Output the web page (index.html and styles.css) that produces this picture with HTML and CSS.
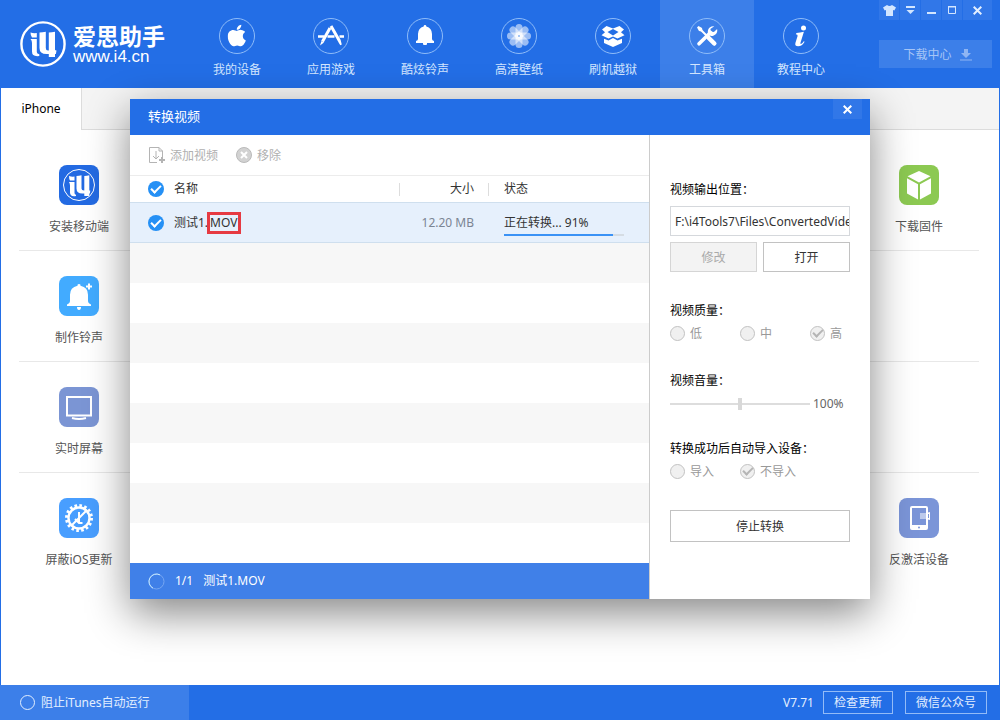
FILE: index.html
```html
<!DOCTYPE html>
<html lang="zh-CN">
<head>
<meta charset="utf-8">
<meta name="viewport" content="width=device-width, initial-scale=1">
<title>爱思助手</title>
<link rel="stylesheet" href="styles.css">
</head>
<body>
<svg class="defs" width="0" height="0" aria-hidden="true">
  <symbol id="brand" viewBox="0 0 46 46">
    <circle cx="23" cy="23" r="21.6" fill="none" stroke="#fff" stroke-width="2.4"/>
    <g fill="#fff">
      <path d="M10.500 11.500q3 1 6.300.5v4.500h-4.800q-1.500-2-1.500-5z"/>
      <path d="M10.500 18h6.300v13q0 2 2.500 2.200v1.800q-7.300 1-7.300-4.500v-8.500q0-2.500-1.500-4z"/>
      <path d="M19.500 11.500q3 0 6.300-.7v16.200q0 2.500 2.200 2.500h.8V11.500q3 0 6.200-.7v18q0 .7 1.500.7l-.6 3.500h-.9v3h-6.200v-3h-2.300q-7 0-7-6z"/>
    </g>
  </symbol>
  <symbol id="bell" viewBox="0 0 18 20">
    <path fill="#fff" d="M9 0a1.300 1.300 0 0 1 1.300 1.400Q16 3 16 9v5q0 1.500 2 2v2H0v-2q2-.5 2-2V9Q2 3 7.700 1.400A1.300 1.300 0 0 1 9 0zM7 18h4v1a1 1 0 0 1-1 1H8a1 1 0 0 1-1-1z"/>
  </symbol>
</svg>

<div class="app">
  <header class="header">
    <a class="logo" href="#">
      <svg class="logo-mark"><use href="#brand"/></svg>
      <span class="logo-text"><strong>爱思助手</strong><span>www.i4.cn</span></span>
    </a>
    <nav class="nav">
      <a class="nav-item" href="#">
        <svg class="nav-icon" viewBox="0 0 36 36"><circle class="ring" cx="18" cy="18" r="17.500"/><svg x="8.500" y="5" width="18.500" height="25" viewBox="0 0 384 512"><path fill="#fff" d="M318.700 268.700c-.2-36.700 16.400-64.400 50-84.800-18.800-26.900-47.200-41.700-84.700-44.600-35.500-2.800-74.300 20.700-88.500 20.700-15 0-49.400-19.700-76.400-19.700C63.300 141.200 4 184.800 4 273.500q0 39.300 14.400 81.200c12.800 36.700 59 126.700 107.200 125.200 25.200-.6 43-17.900 75.800-17.900 31.800 0 48.300 17.900 76.400 17.900 48.600-.7 90.400-82.500 102.600-119.300-65.200-30.700-61.700-90-61.700-91.900zm-56.600-164.200c27.300-32.400 24.800-61.900 24-72.500-24.100 1.400-52 16.400-67.900 34.900-17.500 19.800-27.800 44.300-25.600 71.900 26.100 2 49.900-11.400 69.500-34.300z"/></svg></svg>
        <span>我的设备</span>
      </a>
      <a class="nav-item" href="#">
        <svg class="nav-icon" viewBox="0 0 36 36"><circle class="ring" cx="18" cy="18" r="17.500"/><g stroke="#fff" stroke-width="3" fill="none"><path d="M17 10 9.500 23.500M18 8l8.500 15"/><path d="M5 18.500h6M14.500 18.500h7M26.500 18.500H31" stroke-width="2.600"/></g><path fill="#fff" d="m8.500 23 2.500 1.400-4 3.100zM25 23.500l2.600-1.500 1.200 4.500-1.500.8z"/></svg>
        <span>应用游戏</span>
      </a>
      <a class="nav-item" href="#">
        <svg class="nav-icon" viewBox="0 0 36 36"><circle class="ring" cx="18" cy="18" r="17.500"/><svg x="9" y="7" width="18" height="20"><use href="#bell"/></svg></svg>
        <span>酷炫铃声</span>
      </a>
      <a class="nav-item" href="#">
        <svg class="nav-icon" viewBox="0 0 36 36"><circle class="ring" cx="18" cy="18" r="17.500"/><g fill="#fff" fill-opacity=".55"><rect x="14.500" y="6" width="7" height="12" rx="3.500"/><rect x="14.500" y="6" width="7" height="12" rx="3.500" transform="rotate(45 18 18)"/><rect x="14.500" y="6" width="7" height="12" rx="3.500" transform="rotate(90 18 18)"/><rect x="14.500" y="6" width="7" height="12" rx="3.500" transform="rotate(135 18 18)"/><rect x="14.500" y="6" width="7" height="12" rx="3.500" transform="rotate(180 18 18)"/><rect x="14.500" y="6" width="7" height="12" rx="3.500" transform="rotate(225 18 18)"/><rect x="14.500" y="6" width="7" height="12" rx="3.500" transform="rotate(270 18 18)"/><rect x="14.500" y="6" width="7" height="12" rx="3.500" transform="rotate(315 18 18)"/></g><circle cx="18" cy="18" r="4" fill="#fff" fill-opacity=".6"/><circle cx="18" cy="18" r="1" fill="#8db6f2"/></svg>
        <span>高清壁纸</span>
      </a>
      <a class="nav-item" href="#">
        <svg class="nav-icon" viewBox="0 0 36 36"><circle class="ring" cx="18" cy="18" r="17.500"/><path fill="#fff" d="m11.500 8 6.500 2.500L24.500 8l4.500 3.500-3 2.800 3.500 2.900-7 3.300-4.500-2-4.500 2-7-3.300 3.500-2.900-3-2.800z"/><path fill="#236ee6" d="m18 11 5.500 3-5.500 3.500-5.500-3.500z"/><path fill="#fff" d="m9 20.700 4.500 1.800 4.500-2.500 4.500 2.500 4.500-1.800V25l-9 4-9-4z"/></svg>
        <span>刷机越狱</span>
      </a>
      <a class="nav-item active" href="#" aria-current="page">
        <svg class="nav-icon" viewBox="0 0 36 36"><circle class="ring" cx="18" cy="18" r="17.500"/><g fill="none" stroke="#fff" stroke-linecap="round"><path d="m10 25.800 11.500-11.300" stroke-width="3.600"/><path d="m10.500 10.500 9 9" stroke-width="2"/><path d="m19.800 20 5.500 5.500" stroke-width="4.500"/></g><path fill="#fff" d="m8 9.500 1.500-1.500 3.500 2 .5 2.500-1 1-2.500-.5z"/><path fill="#fff" d="M25.300 8.300a5.500 5.500 0 0 0-6.200 7.200l2.400 2.200a5.400 5.400 0 0 0 6.600-6.600l-3.200 3-3-.5-.5-2.700z"/></svg>
        <span>工具箱</span>
      </a>
      <a class="nav-item" href="#">
        <svg class="nav-icon" viewBox="0 0 36 36"><circle class="ring" cx="18" cy="18" r="17.500"/><circle cx="20.500" cy="10" r="2.500" fill="#fff"/><path fill="#fff" d="M13.500 15q3.500-.2 7.400-1.200l-3.400 11q-.3 1.200.4 1.200 1.200-.2 2.900-2.800l.8.500q-2.600 4.600-6.500 4.600-3.500 0-2.700-3.200l2.200-7.200q.4-1.500-1.800-1.700z"/></svg>
        <span>教程中心</span>
      </a>
    </nav>
    <div class="header-side">
      <div class="window-buttons">
        <button type="button" aria-label="皮肤"><svg width="13" height="11" viewBox="0 0 13 11"><path fill="#d3e6ff" d="M4 0q2.500 2 5 0l4 2.500-1.700 3L10 5v6H3V5l-1.300.5L0 2.500z"/></svg></button>
        <button type="button" aria-label="菜单"><svg width="9" height="8" viewBox="0 0 9 8"><path fill="#d3e6ff" d="M0 0h9v2H0zM.5 4h8l-4 4z"/></svg></button>
        <button type="button" aria-label="最小化"><svg width="9" height="8" viewBox="0 0 9 8"><path fill="#d3e6ff" d="M0 6h9v2H0z"/></svg></button>
        <button type="button" aria-label="最大化"><svg width="8" height="8" viewBox="0 0 8 8"><path fill="none" stroke="#d3e6ff" d="M.5 1h7v6.500h-7zM0 .5h8"/></svg></button>
        <button type="button" class="wide" aria-label="关闭"><svg width="9" height="9" viewBox="0 0 9 9"><path stroke="#e3efff" stroke-width="2" d="m.7.7 7.600 7.600m0-7.600L.7 8.300"/></svg></button>
      </div>
      <button type="button" class="download-center">下载中心
        <svg width="12" height="12" viewBox="0 0 12 12"><path fill="#8fb5f3" d="M4 0h4v4h3L6 9 1 4h3zM0 10.500h12v1H0z"/></svg>
      </button>
    </div>
  </header>

  <div class="tabs"><button type="button" class="tab">iPhone</button></div>

  <main class="tools">
    <div class="tool-row">
      <button type="button" class="tool"><svg viewBox="0 0 40 40"><rect width="40" height="40" rx="8" fill="#236ae2"/><circle cx="20" cy="20" r="15.500" fill="none" stroke="#fff"/><svg x="0" y="0" width="40" height="40" viewBox="3 3 40 40"><g fill="#fff"><path d="M13 14q3 1 5.500.5v4H14q-1-1.500-1-4.500zM13 20h5.500v11q0 1.500 1.500 1.700V34q-6 1-6-3.500v-7q0-2-1-3.500zM20.500 14q2.500 0 5-.7v13.200q0 2 2.500 2h.3V14q2.700 0 5-.7v15.200h1l-.4 3h-.6V34h-5v-2.500h-2q-5.800 0-5.800-5z"/></g></svg></svg><span>安装移动端</span></button>
      <button type="button" class="tool"><svg viewBox="0 0 40 40"><rect width="40" height="40" rx="8" fill="#8cc952"/><path fill="#fff" d="m20 6 11.500 5.300L20 17.500 8.500 11.300zM8 13.300l11 6v15.200l-11-6zM32 13.300l-11 6v15.200l11-6z"/></svg><span>下载固件</span></button>
    </div>
    <div class="tool-row">
      <button type="button" class="tool"><svg viewBox="0 0 40 40"><rect width="40" height="40" rx="8" fill="#42abff"/><path fill="#fff" d="M20 8a1.500 1.500 0 0 1 1.500 1.800q7.500 1.500 7.500 9v6q0 2.700 3 3.700V30H8v-1.500q3-1 3-3.700v-6q0-7.500 7.500-9A1.500 1.500 0 0 1 20 8zM18 31h4q0 3-2 3t-2-3zM29 7.500h2v2h2v2h-2v2h-2v-2h-2v-2h2z"/></svg><span>制作铃声</span></button>
    </div>
    <div class="tool-row">
      <button type="button" class="tool"><svg viewBox="0 0 40 40"><rect width="40" height="40" rx="8" fill="#7b95d4"/><path fill="none" stroke="#fff" stroke-width="2" d="M8 10h24v18.500H8zM13 31q7 1.800 14 0"/></svg><span>实时屏幕</span></button>
    </div>
    <div class="tool-row">
      <button type="button" class="tool"><svg viewBox="0 0 40 40"><rect width="40" height="40" rx="8" fill="#489eff"/><circle cx="20" cy="20" r="12.500" fill="none" stroke="#fff" stroke-width="3" stroke-dasharray="2.600 2.309"/><circle cx="20" cy="20" r="10.500" fill="none" stroke="#fff" stroke-width="2.400"/><path fill="none" stroke="#fff" stroke-width="2" d="m12 28 16-16M20 14v10m-4-3 4 4h3.500"/></svg><span>屏蔽iOS更新</span></button>
      <button type="button" class="tool"><svg viewBox="0 0 40 40"><rect width="40" height="40" rx="8" fill="#7b95d8"/><path fill="#fff" fill-rule="evenodd" d="M13 8h14a2 2 0 0 1 2 2v20a2 2 0 0 1-2 2H13a2 2 0 0 1-2-2V10a2 2 0 0 1 2-2zM13 10v17h14V10z"/><path fill="#bccaec" d="M21 15h6v6h-6z"/><path fill="#fff" d="m27 15 4-1v8l-4-1z"/><path fill="#7b95d8" d="M29 16h1v4h-1z"/><circle cx="20" cy="29.500" r="1" fill="#7b95d8"/></svg><span>反激活设备</span></button>
    </div>
  </main>

  <footer class="footer">
    <label class="block-itunes"><input type="checkbox">阻止iTunes自动运行</label>
    <div class="footer-side">
      <span>V7.71</span>
      <button type="button">检查更新</button>
      <button type="button">微信公众号</button>
    </div>
  </footer>

  <div class="overlay">
    <section class="dialog" role="dialog" aria-labelledby="dialog-title">
      <div class="dialog-head">
        <h1 id="dialog-title">转换视频</h1>
        <button type="button" class="dialog-close" aria-label="关闭"><svg width="9" height="9" viewBox="0 0 9 9"><path stroke="#fff" stroke-width="2" d="m.7.7 7.600 7.600m0-7.600L.7 8.300"/></svg></button>
      </div>
      <div class="dialog-body">
        <div class="queue">
          <div class="toolbar">
            <button type="button" disabled><svg width="17" height="18" viewBox="0 0 17 18"><g fill="none" stroke="#b4b4b4"><path d="M9 16.500H1.500v-15H11L14.500 5v6M11 1.500V5h3.500M8 5v8M5 10l3 3 3-3"/><path stroke-width="2" d="M14 11v6M11 14h6"/></g></svg><span>添加视频</span></button>
            <button type="button" disabled><svg width="16" height="16" viewBox="0 0 16 16"><circle cx="8" cy="8" r="7.500" fill="#d2d2d2" stroke="#bababa"/><path stroke="#fff" stroke-width="2" d="m5 5 6 6m0-6-6 6"/></svg><span>移除</span></button>
          </div>
          <table class="files">
            <thead>
              <tr>
                <th class="name"><div><input class="check" type="checkbox" checked aria-label="全选">名称</div></th>
                <th class="size">大小</th>
                <th class="state">状态</th>
              </tr>
            </thead>
            <tbody>
              <tr>
                <td class="name"><div><input class="check" type="checkbox" checked aria-label="测试1.MOV"><span>测试1.<mark>MOV</mark></span></div></td>
                <td class="size">12.20 MB</td>
                <td class="state"><label for="progress">正在转换... 91%</label><progress id="progress" value="91" max="100"></progress></td>
              </tr>
            </tbody>
          </table>
          <div class="stripes"></div>
          <div class="status">
            <svg width="17" height="17" viewBox="0 0 17 17" fill="none"><circle cx="8.500" cy="8.500" r="7.500" stroke="#76a6f2"/><path stroke="#c9ecff" d="M12 1.900A7.500 7.500 0 1 0 5 15.200"/></svg>
            <span>1/1</span><span>测试1.MOV</span>
          </div>
        </div>
        <form class="options">
          <label class="title" for="output">视频输出位置：</label>
          <input class="path" id="output" type="text" value="F:\i4Tools7\Files\ConvertedVideo">
          <div class="pair">
            <button type="button" disabled>修改</button>
            <button type="button">打开</button>
          </div>
          <fieldset disabled>
            <legend class="title">视频质量：</legend>
            <div class="radios">
              <label><input type="radio" name="quality"><span>低</span></label>
              <label><input type="radio" name="quality"><span>中</span></label>
              <label><input type="radio" name="quality" checked><span>高</span></label>
            </div>
          </fieldset>
          <label class="title" for="volume">视频音量：</label>
          <div class="volume"><input id="volume" type="range" min="0" max="200" value="100" disabled><output for="volume">100%</output></div>
          <fieldset disabled>
            <legend class="title">转换成功后自动导入设备：</legend>
            <div class="radios">
              <label><input type="radio" name="import"><span>导入</span></label>
              <label><input type="radio" name="import" checked><span>不导入</span></label>
            </div>
          </fieldset>
          <button type="button" class="stop">停止转换</button>
        </form>
      </div>
    </section>
  </div>
</div>
</body>
</html>
```
FILE: styles.css
```css
* {
  box-sizing: border-box;
}

body {
  margin: 0;
  font: 12px/18px "Noto Sans", "Noto Sans CJK SC", sans-serif;
  color: #333;
}

button,
input {
  font: inherit;
  color: inherit;
  margin: 0;
}

button {
  padding: 0;
  border: 0;
  background: none;
}

a {
  color: inherit;
  text-decoration: none;
}

svg {
  display: block;
  flex: none;
}

.defs {
  position: absolute;
}

.app {
  position: relative;
  display: flex;
  flex-direction: column;
  min-height: 100vh;
  background: #fff;
}

/* Header */
.header {
  display: flex;
  height: 88px;
  background: #236ee6;
  color: #d3e6ff;
}

.logo {
  display: flex;
  align-items: center;
  gap: 7px;
  width: 190px;
  padding-left: 20px;
  color: #fff;
}

.logo-mark {
  width: 46px;
  height: 46px;
}

.logo-text {
  display: flex;
  flex-direction: column;
  font: 17px/18px "Liberation Sans", sans-serif;
}

.logo-text strong {
  font: bold 23px/26px "Noto Sans CJK SC", sans-serif;
}

.nav {
  display: flex;
}

.nav-item {
  display: flex;
  flex-direction: column;
  align-items: center;
  gap: 7px;
  width: 94px;
  padding-top: 18px;
}

.nav-item.active {
  background: #3c7fe9;
}

.nav-icon {
  width: 36px;
  height: 36px;
}

.ring {
  fill: none;
  stroke: #8fbcf8;
}

.header-side {
  display: flex;
  flex-direction: column;
  gap: 20px;
  width: 113px;
  margin: 0 8px 0 auto;
}

.window-buttons {
  display: flex;
  gap: 1px;
}

.window-buttons button {
  display: grid;
  place-items: center;
  width: 20px;
  height: 20px;
  background: #3177e8;
}

.window-buttons .wide {
  width: 29px;
}

.download-center {
  display: flex;
  align-items: center;
  justify-content: center;
  gap: 8px;
  height: 28px;
  padding: 2px 0 0 4px;
  background: #3c7fe9;
  color: #a6c5f6;
}

/* Tabs */
.tabs {
  display: flex;
  height: 42px;
  border: solid #236ee6;
  border-width: 0 1px;
  background: #f4f4f4;
  box-shadow: inset 0 -1px #dcdcdc;
}

.tab {
  width: 81px;
  border-right: 1px solid #dcdcdc;
  background: #fff;
  color: #000;
}

/* Tool grid */
.tools {
  flex: 1;
  padding: 10px 20px 10px 18px;
  border: solid #236ee6;
  border-width: 0 1px;
}

.tool-row {
  display: flex;
  justify-content: space-between;
  height: 111px;
  padding-top: 25px;
  border-bottom: 1px solid #e8e8e8;
}

.tool-row:last-child {
  border-bottom: 0;
}

.tool {
  display: flex;
  flex-direction: column;
  align-items: center;
  gap: 13px;
  width: 120px;
  color: #555;
}

.tool > svg {
  width: 40px;
  height: 40px;
}

/* Footer */
.footer {
  display: flex;
  justify-content: space-between;
  height: 35px;
  background: #236ee6;
  color: #e3efff;
}

.block-itunes {
  display: flex;
  align-items: center;
  gap: 6px;
  width: 189px;
  padding-left: 20px;
  background: #3c7fe9;
}

.block-itunes input {
  appearance: none;
  width: 15px;
  height: 15px;
  border: 1px solid #e3efff;
  border-radius: 50%;
}

.footer-side {
  display: flex;
  align-items: center;
  gap: 12px;
  padding-right: 13px;
}

.footer-side span {
  margin-right: -3px;
}

.footer-side button {
  height: 23px;
  padding: 0 10px;
  border: 1px solid #93bbf7;
}

/* Dialog */
.overlay {
  position: absolute;
  inset: 99px 0 auto;
  display: flex;
  justify-content: center;
}

.dialog {
  width: 740px;
  background: #fff;
  box-shadow: 0 14px 40px rgba(0, 0, 0, .48);
}

.dialog-head {
  display: flex;
  justify-content: space-between;
  align-items: flex-start;
  height: 36px;
  padding: 0 8px 0 18px;
  background: #236ee6;
  color: #fff;
}

.dialog-head h1 {
  margin: 0;
  font-size: 13px;
  font-weight: normal;
  line-height: 34px;
}

.dialog-close {
  display: grid;
  place-items: center;
  width: 29px;
  height: 20px;
  background: #3177e8;
}

.dialog-body {
  display: flex;
  height: 464px;
}

.queue {
  flex: 1;
  display: flex;
  flex-direction: column;
  border-right: 1px solid #ccc;
}

.toolbar {
  display: flex;
  align-items: center;
  gap: 18px;
  height: 41px;
  padding-left: 18px;
  border-bottom: 1px solid #ececec;
}

.toolbar button {
  display: flex;
  align-items: center;
  gap: 5px;
  color: #b0b0b0;
}

.toolbar span,
.radios span {
  padding-top: 2px;
}

/* File table */
.files {
  width: 100%;
  border-collapse: separate;
  border-spacing: 0;
  table-layout: fixed;
}

.files th,
.files td {
  padding: 0;
  border-bottom: 1px solid #cfdfee;
  font-weight: normal;
  text-align: left;
}

.files th {
  height: 27px;
}

.files td {
  height: 40px;
  background: #e6f0fc;
}

.files .name div {
  display: flex;
  align-items: center;
  gap: 10px;
  padding-left: 18px;
}

.files .size {
  width: 89px;
  padding-right: 14px;
  text-align: right;
}

.files td.size {
  color: #7b8593;
}

.files .state {
  width: 161px;
  padding-left: 16px;
}

.files th.size,
.files th.state {
  background: linear-gradient(#ddd, #ddd) left center / 1px 13px no-repeat;
}

.check {
  display: grid;
  place-items: center;
  appearance: none;
  width: 16px;
  height: 16px;
  border-radius: 50%;
  background: #2590f5;
}

.check::after,
.radios input:checked::after {
  content: "";
  width: 8px;
  height: 4px;
  margin-bottom: 2px;
  border: solid #fff;
  border-width: 0 0 2px 2px;
  transform: rotate(-45deg);
}

.files mark {
  display: inline-block;
  height: 16px;
  margin-left: 2px;
  padding-right: 1px;
  line-height: 16px;
  background: none;
  color: inherit;
  outline: 3px solid #e63a42;
}

.files .state label {
  display: block;
  padding-top: 4px;
}

progress {
  display: block;
  appearance: none;
  width: 120px;
  height: 2px;
  margin-top: 2px;
  border: 0;
}

progress::-webkit-progress-bar {
  background: #d5dce3;
}

progress::-webkit-progress-value {
  background: #3a92f5;
}

.stripes {
  flex: 1;
  background: repeating-linear-gradient(#f7f7f7 0 40px, #fff 40px 80px);
}

.status {
  display: flex;
  align-items: center;
  gap: 10px;
  height: 36px;
  padding-left: 18px;
  background: #4080e8;
  color: #fff;
}

/* Options */
.options {
  display: flex;
  flex-direction: column;
  width: 220px;
  padding: 46px 20px 0;
}

.title {
  padding: 0;
  color: #000;
}

.path {
  width: 100%;
  height: 30px;
  margin-top: 7px;
  padding: 0 0 0 4px;
  border: 1px solid #d5d8dc;
  background: #fff;
}

.pair {
  display: grid;
  grid-template-columns: 1fr 1fr;
  gap: 6px;
  margin: 6px 0 30px;
}

.pair button,
.stop {
  height: 30px;
  padding-top: 1px;
  border: 1px solid #c2c2c2;
  background: #fff;
}

.pair button:disabled {
  border-color: #d5d5d5;
  background: #f3f3f3;
  color: #aaa;
}

fieldset {
  min-width: 0;
  margin: 0;
  padding: 0;
  border: 0;
}

.radios {
  display: grid;
  grid-template-columns: repeat(3, 70px);
  margin: 3px 0 29px;
  color: #999;
}

.radios label {
  display: flex;
  align-items: center;
  gap: 5px;
  white-space: nowrap;
}

.radios input {
  display: grid;
  place-items: center;
  flex: none;
  appearance: none;
  width: 15px;
  height: 15px;
  border: 1px solid #c2c2c2;
  border-radius: 50%;
  background: #f0f0f0;
}

.radios input:checked::after {
  border-color: #b5b5b5;
}

.volume {
  display: flex;
  align-items: center;
  gap: 3px;
  margin: 5px 0 27px;
  color: #666;
}

.volume input {
  appearance: none;
  width: 140px;
  height: 12px;
  background: linear-gradient(#ddd, #ddd) center / 100% 2px no-repeat;
}

.volume input::-webkit-slider-thumb {
  appearance: none;
  width: 4px;
  height: 12px;
  background: #d8d8d8;
}

.stop {
  height: 32px;
}
```
